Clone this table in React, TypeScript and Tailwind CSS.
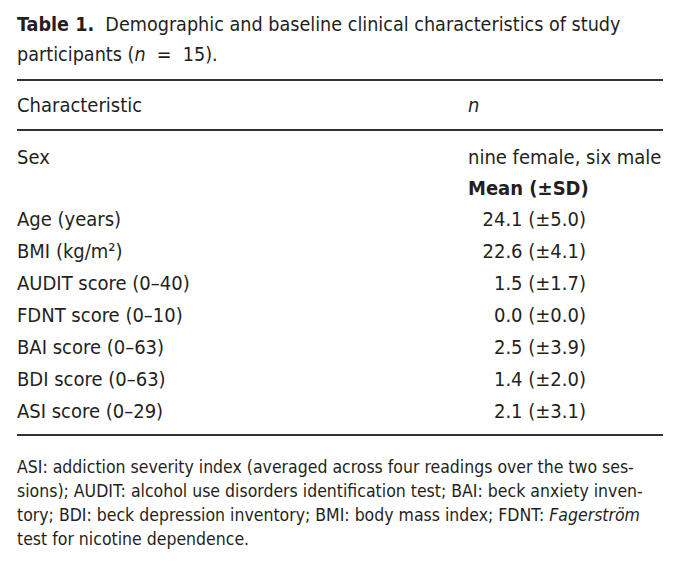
import React from 'react';

const rows: [string, string][] = [
  ['Age (years)', '24.1 (±5.0)'],
  ['BMI (kg/m²)', '22.6 (±4.1)'],
  ['AUDIT score (0–40)', '1.5 (±1.7)'],
  ['FDNT score (0–10)', '0.0 (±0.0)'],
  ['BAI score (0–63)', '2.5 (±3.9)'],
  ['BDI score (0–63)', '1.4 (±2.0)'],
  ['ASI score (0–29)', '2.1 (±3.1)'],
];

const App: React.FC = () => {
  return (
    <div
      className="w-[680px] h-[568px] bg-white text-[#231f20] px-[17px] pt-[10px]"
      style={{ fontFamily: '"DejaVu Sans Condensed", "Liberation Sans Narrow", sans-serif' }}
    >
      <div className="text-[19.6px] leading-[30px] whitespace-nowrap">
        <div>
          <b>Table 1.</b>&nbsp; Demographic and baseline clinical characteristics of study
        </div>
        <div>
          participants (<i>n</i>&nbsp;&nbsp;=&nbsp;&nbsp;15).
        </div>
      </div>

      <div className="mt-[9px] border-t-2 border-[#333]">
        <div className="flex h-[48px] items-center text-[20px]">
          <div className="w-[451px]">Characteristic</div>
          <div className="italic">n</div>
        </div>
      </div>

      <div className="border-t-2 border-b-2 border-[#333] pt-[10px] pb-[7px] text-[20px]">
        <div className="flex h-[31px] items-center">
          <div className="w-[451px]">Sex</div>
          <div className="whitespace-nowrap">nine female, six male</div>
        </div>
        <div className="flex h-[31px] items-center">
          <div className="w-[451px]"></div>
          <div className="font-bold whitespace-nowrap">Mean (±SD)</div>
        </div>
        {rows.map(([label, value]) => (
          <div key={label} className="flex h-[32px] items-center">
            <div className="w-[451px]">{label}</div>
            <div className="w-[118px] text-right whitespace-nowrap">{value}</div>
          </div>
        ))}
      </div>

      <div className="mt-[19px] text-[17.5px] leading-[24px] whitespace-nowrap">
        <div>ASI: addiction severity index (averaged across four readings over the two ses-</div>
        <div>sions); AUDIT: alcohol use disorders identification test; BAI: beck anxiety inven-</div>
        <div>
          tory; BDI: beck depression inventory; BMI: body mass index; FDNT: <i>Fagerström</i>
        </div>
        <div>test for nicotine dependence.</div>
      </div>
    </div>
  );
};

export default App;
